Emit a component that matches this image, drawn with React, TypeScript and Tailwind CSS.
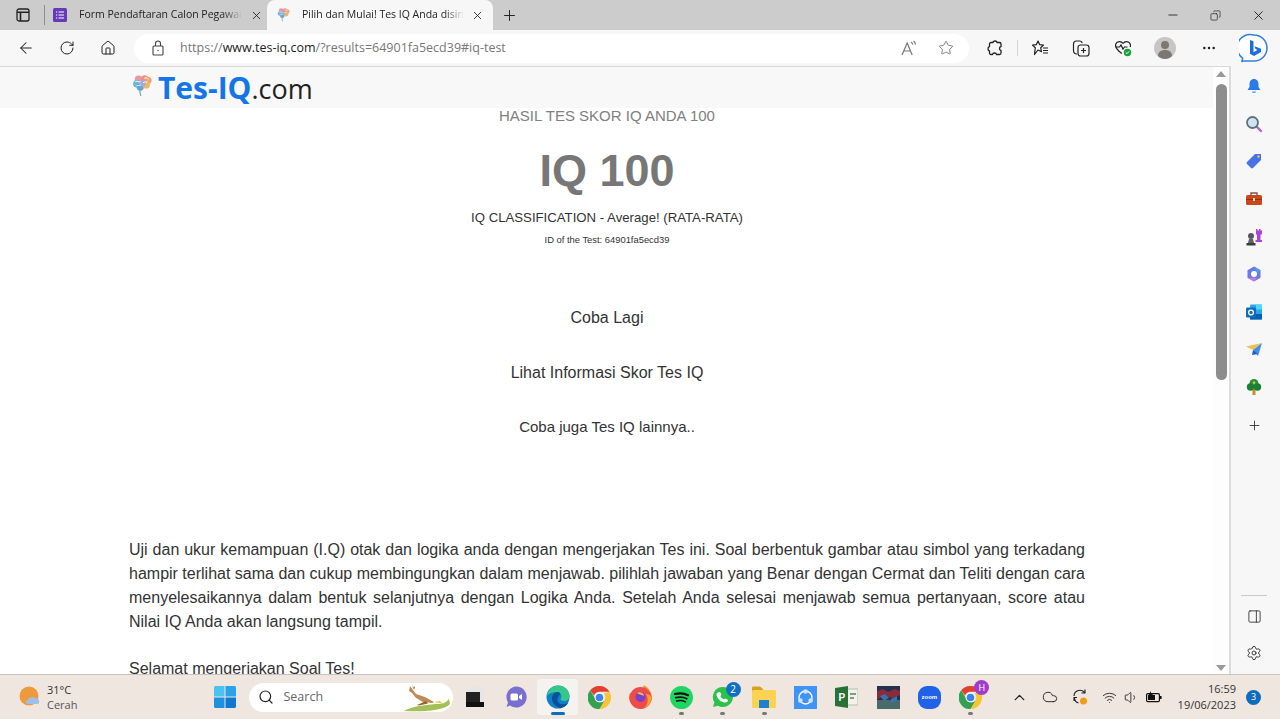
import {
  ArrowLeft, RotateCw, Home, Star, X, Plus, Minus, Copy, MoreHorizontal,
  Search, ChevronUp, Cloud, Wifi, Volume1, PanelRight, Settings,
} from "lucide-react"
import type { ReactNode } from "react"

const uiFont = "font-['Open_Sans',sans-serif]"

function TabStripIcon() {
  return (
    <svg width="16" height="16" viewBox="0 0 16 16" fill="none" stroke="#222" strokeWidth="1.3">
      <rect x="2" y="2" width="12" height="12" rx="2" />
      <path d="M2 5.2h12M5.500 5v9" strokeWidth="1.6" />
    </svg>
  )
}

function FormsIcon() {
  return (
    <svg width="14" height="14" viewBox="0 0 14 14">
      <rect width="14" height="14" rx="1.5" fill="#673ab7" />
      <path d="M3 4h1.200M5.500 4H11M3 7h1.200M5.500 7H11M3 10h1.200M5.500 10H11" stroke="#fff" strokeWidth="1.2" />
    </svg>
  )
}

function BrainLogo({ size = 20 }: { size?: number }) {
  return (
    <svg width={size} height={size} viewBox="0 0 20 20" fill="none">
      <circle cx="6" cy="4" r="3.500" fill="#e79aa5" />
      <circle cx="4.500" cy="8" r="3.500" fill="#6fb7d8" />
      <circle cx="7.500" cy="11" r="3.300" fill="#5ea8d0" />
      <circle cx="11.500" cy="3.500" r="3.300" fill="#ef8f8a" />
      <circle cx="14.500" cy="5" r="3.300" fill="#f0a36f" />
      <circle cx="13" cy="9" r="3.300" fill="#eeb765" />
      <circle cx="9.500" cy="7.500" r="3" fill="#a5a8d8" />
      <path d="M3 6c2-1 3 1 5 0M4 10c1-1 3 0 4-1M11 3c2-1 3 0 4 1M10 7c1-1 3 0 4-1" stroke="#fff" strokeWidth=".8" />
      <path d="M7 14l1 5" stroke="#7fa9c0" strokeWidth="1.200" />
    </svg>
  )
}

function LockIcon() {
  return (
    <svg width="14" height="16" viewBox="0 0 14 16" fill="none" stroke="#444" strokeWidth="1.1">
      <rect x="2" y="6" width="10" height="9" rx="1" />
      <path d="M4.500 6V3.500a2.500 2.500 0 0 1 5 0V6" />
      <circle cx="7" cy="10.500" r=".7" fill="#444" stroke="none" />
    </svg>
  )
}

function ExtensionIcon() {
  return (
    <svg width="18" height="18" viewBox="0 0 18 18" fill="none" stroke="#222" strokeWidth="1.300" strokeLinejoin="round">
      <path d="M7 3.500C7 1.500 11 1.500 11 3.500h2.500c.8 0 1.500.7 1.500 1.500v2.500c-2 .3-2 3.700 0 4V14c0 .8-.7 1.500-1.500 1.500H10.500c-.3-2-3.700-2-4 0H5c-.8 0-1.500-.7-1.500-1.500v-2C1.500 11.500 1.500 8 3.500 7.500V5C3.500 4.200 4.200 3.500 5 3.500z" />
    </svg>
  )
}

function ReadAloudIcon() {
  return (
    <svg width="18" height="18" viewBox="0 0 18 18" fill="none" stroke="#777" strokeWidth="1.2">
      <path d="M2 16L7.200 4l5 12M4 12h6.500" />
      <path d="M11 3c1 .5 1.500 1.300 1.700 2.500M13.500 2c1.200.8 1.800 2 2 3.500" />
    </svg>
  )
}

function FavoritesIcon() {
  return (
    <svg width="18" height="18" viewBox="0 0 18 18" fill="none" stroke="#222" strokeWidth="1.2" strokeLinejoin="round">
      <path d="M7 2l1.700 3.700 3.800.4-2.800 2.700.8 3.900L7 11l-3.500 4.500.8-6.700L1.500 6.100l3.800-.4z" />
      <path d="M12 9h5M12 11.500h5M12 14h5" />
    </svg>
  )
}

function CollectionsIcon() {
  return (
    <svg width="18" height="18" viewBox="0 0 18 18" fill="none" stroke="#222" strokeWidth="1.2">
      <path d="M5 15c-2 0-3.500-1.500-3.500-3.500V5c0-1.500 1-3 3-3h3c1.500 0 2.500.8 2.500 2" />
      <rect x="6" y="6" width="11" height="11" rx="2.500" />
      <path d="M11.500 9v5M9 11.500h5" />
    </svg>
  )
}

function HeartCheckIcon() {
  return (
    <svg width="18" height="18" viewBox="0 0 18 18" fill="none">
      <path d="M9 4.500C7.500 2 3 2 1.800 5c-1 2.500 1 5 3 7l3 2.500M9 4.500c1.500-2.500 6-2.500 7.200.5.400 1 .300 2 0 3" stroke="#222" strokeWidth="1.200" />
      <path d="M1.500 8h4l1.500-2 2 4 1.500-2h3" stroke="#222" strokeWidth="1.200" />
      <circle cx="13.500" cy="13.500" r="3.700" fill="#18a33a" />
      <path d="M11.800 13.500l1.200 1.200 2-2.200" stroke="#fff" strokeWidth="1" />
    </svg>
  )
}

function Avatar() {
  return (
    <div className="flex h-[22px] w-[22px] items-center justify-center rounded-full bg-[#c9c5c2]">
      <svg width="22" height="22" viewBox="0 0 22 22" fill="#7b7775">
        <circle cx="11" cy="8" r="4" />
        <path d="M4 19c0-4 3-6 7-6s7 2 7 6c-2 2-4.500 3-7 3s-5-1-7-3z" />
      </svg>
    </div>
  )
}

function BingIcon() {
  return (
    <svg width="30" height="30" viewBox="0 0 30 30">
      <path d="M15 2a13 13 0 0 1 0 26H4l-1 .500c-.500-1 1-2 .600-3.500A13 13 0 0 1 15 2z" fill="#fff" stroke="#2f7fe0" strokeWidth="1.500" />
      <path d="M11 7l3.500 1.200v11l4-2.200-2-1-1-2.700 6.500 2.400v3.300l-7 4-4-2.200z" fill="#1a6fd8" />
    </svg>
  )
}

/* sidebar icons */
function BellIcon() {
  return (
    <svg width="16" height="16" viewBox="0 0 16 16">
      <path d="M8 1c3 0 4.500 2.500 4.500 5v3l2 3H1.500l2-3V6C3.500 3.500 5 1 8 1z" fill="#2a7be8" />
      <path d="M6 13.500h4c0 1-1 1.500-2 1.500s-2-.5-2-1.500z" fill="#5a9ef0" />
    </svg>
  )
}
function SearchColorIcon() {
  return (
    <svg width="18" height="18" viewBox="0 0 18 18" fill="none">
      <path d="M11 11l5 5" stroke="#b35fd0" strokeWidth="2.400" strokeLinecap="round" />
      <circle cx="7.500" cy="7.500" r="5.500" fill="#cfe4ee" stroke="#5e7180" strokeWidth="1.800" />
    </svg>
  )
}
function TagIcon() {
  return (
    <svg width="18" height="18" viewBox="0 0 18 18">
      <path d="M10 2h6v6l-8 8c-.6.600-1.400.600-2 0l-4-4c-.6-.6-.6-1.400 0-2z" fill="#4a72e8" />
      <circle cx="13.500" cy="4.500" r="1.200" fill="#f3c14a" />
    </svg>
  )
}
function ToolboxIcon() {
  return (
    <svg width="18" height="16" viewBox="0 0 18 16">
      <path d="M6 4V2h6v2" fill="none" stroke="#7a5a50" strokeWidth="1.400" />
      <rect x="1" y="4" width="16" height="10" rx="1.500" fill="#c8481e" />
      <rect x="1" y="8" width="16" height="1" fill="#8f2f10" />
      <rect x="8" y="7" width="2" height="3" fill="#f1d2b8" />
    </svg>
  )
}
function ChessIcon() {
  return (
    <svg width="18" height="18" viewBox="0 0 18 18">
      <path d="M11 1h1.500v1.500H14V1h1.500v1.500H17V1v5l-1.500 1v5H17v2h-6.500v-2H12V7l-1-1z" fill="#b13fdc" />
      <circle cx="6" cy="8" r="3" fill="#55585c" />
      <path d="M4 11h4l1 4H3z" fill="#5f6266" />
      <rect x="1.500" y="15" width="9" height="2.500" fill="#3a3b3e" />
    </svg>
  )
}
function CopilotIcon() {
  return (
    <svg width="18" height="18" viewBox="0 0 18 18" fill="none">
      <path d="M9 1.500l6.500 3.800v7.400L9 16.500l-6.500-3.800V5.300z" fill="#6a78e8" />
      <path d="M9 1.500l6.500 3.800L12 8z" fill="#4a9ee8" />
      <path d="M2.500 12.700L9 16.500l3-4z" fill="#c779dd" />
      <circle cx="9" cy="9" r="3" fill="#fff" />
    </svg>
  )
}
function OutlookIcon() {
  return (
    <svg width="18" height="18" viewBox="0 0 18 18">
      <rect x="5" y="1.500" width="12" height="15" rx="1" fill="#28a8ea" />
      <rect x="11" y="1.500" width="6" height="5" fill="#50d9ff" />
      <rect x="5" y="11" width="12" height="5.500" fill="#0a5fb0" />
      <rect x="1" y="4.500" width="10" height="10" rx="1" fill="#0f6cbd" />
      <circle cx="6" cy="9.500" r="2.400" fill="none" stroke="#fff" strokeWidth="1.300" />
    </svg>
  )
}
function SendIcon() {
  return (
    <svg width="18" height="16" viewBox="0 0 18 16">
      <path d="M1 4.500L17 1 8 8z" fill="#f0c24b" />
      <path d="M17 1l-4 13-5-6z" fill="#3d8ff0" />
      <path d="M8 8l-1 5 6-1z" fill="#1f5fc8" />
    </svg>
  )
}
function TreeIcon() {
  return (
    <svg width="16" height="18" viewBox="0 0 16 18">
      <rect x="6.500" y="11" width="3" height="6" fill="#d08a24" />
      <circle cx="8" cy="5.500" r="4.500" fill="#23913c" />
      <circle cx="4.500" cy="9" r="3.700" fill="#1b8033" />
      <circle cx="11.500" cy="9" r="3.700" fill="#1b8033" />
      <rect x="6.800" y="3.500" width="2.400" height="2.400" fill="#d7c13c" transform="rotate(45 8 4.700)" />
    </svg>
  )
}

/* taskbar icons */
function StartIcon() {
  return (
    <svg width="22" height="22" viewBox="0 0 22 22">
      <path d="M0 1.500C0 .7.700 0 1.500 0h9v10.500H0z" fill="#4cc2f1" />
      <path d="M11.500 0h9c.8 0 1.500.7 1.500 1.500v9H11.500z" fill="#2aa3e8" />
      <path d="M0 11.500h10.500V22h-9C.7 22 0 21.300 0 20.500z" fill="#1e90df" />
      <path d="M11.500 11.500H22v9c0 .8-.7 1.500-1.500 1.500h-9z" fill="#0f78d0" />
    </svg>
  )
}
function Kangaroo() {
  return (
    <svg width="46" height="28" viewBox="0 0 46 28">
      <path d="M0 27c8-5 26-7 36-7 4 0 7-3 9-5l1 5c-6 7-30 8-46 7z" fill="#a3bf55" />
      <path d="M30 18l6-1 3 3z" fill="#d7d24a" />
      <path d="M6 2l3 4 3 4 9 3 9 5-2 1-9-1-7-4-4-5-3-2z" fill="#c08a58" />
      <path d="M8 0l1 4 2-2-1 4z" fill="#8a5529" />
      <path d="M22 17l-9 4 2 .5 9-2z" fill="#9a6231" />
    </svg>
  )
}
function DarkTile() {
  return (
    <svg width="18" height="20" viewBox="0 0 18 20">
      <rect width="18" height="20" fill="#e6e6e6" />
      <rect y="5" width="14" height="15" fill="#222" />
      <rect y="15" width="18" height="5" fill="#111" />
    </svg>
  )
}
function TeamsIcon() {
  return (
    <svg width="22" height="22" viewBox="0 0 22 22">
      <path d="M11 .5a10.500 10.500 0 1 1-6 19L1.500 21 3 16.500A10.500 10.500 0 0 1 11 .5z" fill="#7a6fd0" />
      <rect x="5.500" y="7.500" width="7.500" height="7" rx="1.500" fill="#fff" />
      <path d="M14 10l3-2v6l-3-2z" fill="#fff" />
    </svg>
  )
}
function EdgeIcon() {
  return (
    <svg width="24" height="24" viewBox="0 0 24 24">
      <circle cx="12" cy="12" r="11.500" fill="#0f7fc8" />
      <path d="M1 11C2 4 7 .5 12 .5c6.500 0 11.500 5 11.500 10.500 0 3-2.500 5-5.500 5-2 0-3.500-.8-3.500-2 2-2.500.5-7-3.500-7C7 7 3 8 1 11z" fill="#35c88a" />
      <path d="M12 7c-3.500 0-6 3-6 6.500 0 4 3.500 8 8.500 9.500 3-.5 6.500-2.500 8-5.500-2.500 2-6.500 2.500-9 1-2.500-1.500-3.500-6 1-9.500-.7-1.300-1.500-2-2.500-2z" fill="#0a4f97" />
    </svg>
  )
}
function ChromeIcon() {
  return (
    <svg width="23" height="23" viewBox="0 0 24 24">
      <path d="M12 0a12 12 0 0 1 10.400 6H12a6 6 0 0 0-5.700 4L2.300 4.500A12 12 0 0 1 12 0z" fill="#e0402f" />
      <path d="M22.400 6A12 12 0 0 1 12 24l5.200-9A6 6 0 0 0 16.500 8z" fill="#f7c531" />
      <path d="M2.300 4.500A12 12 0 0 0 12 24l5.200-9a6 6 0 0 1-10.400-3z" fill="#35a04f" />
      <circle cx="12" cy="12" r="5" fill="#fff" />
      <circle cx="12" cy="12" r="4" fill="#3d83f0" />
    </svg>
  )
}
function FirefoxIcon() {
  return (
    <svg width="23" height="24" viewBox="0 0 23 24">
      <path d="M15 0c5 3 8 8 8 12.500A11.500 11.500 0 1 1 1 7.500c.5 1 1 1.500 1.500 2C3 7 5 5 8 4c3 0 5 2 7-4z" fill="#f79a2b" />
      <circle cx="11.500" cy="13" r="11" fill="#ee4b4b" />
      <path d="M22.500 13a11 11 0 0 1-8 10.500C19 20 20 14 17 9c3 0 5 1 5.500 4z" fill="#f7a02b" />
      <circle cx="11.500" cy="12" r="5" fill="#7b3fc8" />
      <path d="M8 8c3-2 7 0 7 3-3-2-5-1-7-3z" fill="#f2c14a" />
    </svg>
  )
}
function SpotifyIcon() {
  return (
    <svg width="23" height="23" viewBox="0 0 23 23" fill="none">
      <circle cx="11.500" cy="11.500" r="11.500" fill="#1ed760" />
      <path d="M5 8c4-1 9-1 13 1.200" stroke="#111" strokeWidth="2.200" strokeLinecap="round" />
      <path d="M5.800 11.700c3.500-.9 8-.6 11 1" stroke="#111" strokeWidth="1.800" strokeLinecap="round" />
      <path d="M6.500 15c3-.7 6.500-.5 9 .8" stroke="#111" strokeWidth="1.500" strokeLinecap="round" />
    </svg>
  )
}
function WhatsappIcon() {
  return (
    <svg width="22" height="22" viewBox="0 0 22 22">
      <path d="M11 1a10 10 0 1 1-5 18.700L1 21l1.400-4.700A10 10 0 0 1 11 1z" fill="#2bc24c" />
      <path d="M7.500 6c1 0 1.500 2 1.800 3l-1 1c.8 1.500 2 2.700 3.700 3.500l1-1.100c1 .3 3 1 3 1.800 0 1.300-1.500 2.300-3 2.300-4 0-8.500-4.500-8.500-8 0-1.500 1.500-2.500 3-2.500z" fill="#fff" />
    </svg>
  )
}
function FolderIcon() {
  return (
    <svg width="24" height="22" viewBox="0 0 24 22">
      <path d="M0 2c0-1 .7-1.500 1.500-1.500H8l3 2.500v3H0z" fill="#d9a21b" />
      <rect y="4" width="24" height="18" rx="1.500" fill="#fbd254" />
      <rect x="7" y="14" width="10" height="8" fill="#1f7fd0" />
    </svg>
  )
}
function ShareitIcon() {
  return (
    <svg width="23" height="23" viewBox="0 0 23 23" fill="none">
      <rect width="23" height="23" fill="#3f94f5" />
      <circle cx="11.500" cy="11.500" r="6.500" stroke="#fff" strokeWidth="1.400" />
      <circle cx="11.500" cy="5.500" r="2.300" fill="#cfe3ff" />
      <circle cx="6.300" cy="14.500" r="2.300" fill="#cfe3ff" />
      <circle cx="16.700" cy="14.500" r="2.300" fill="#cfe3ff" />
    </svg>
  )
}
function ProjectIcon() {
  return (
    <svg width="23" height="22" viewBox="0 0 23 22">
      <rect x="6" y="3" width="17" height="16" fill="#f3f1ee" stroke="#a9c4ae" />
      <path d="M0 2l13-2v22L0 20z" fill="#2a7136" />
      <path d="M15 8h6M15 12h4" stroke="#55825c" strokeWidth="1.500" />
      <text x="3.500" y="15" fontSize="10" fontWeight="700" fill="#fff" fontFamily="Liberation Sans, sans-serif">P</text>
    </svg>
  )
}
function GameThumb() {
  return (
    <svg width="23" height="23" viewBox="0 0 23 23">
      <rect width="23" height="23" fill="#24304f" />
      <rect y="14" width="23" height="9" fill="#4a6a6a" />
      <path d="M0 5l6-2 5 3 7-3 5 2v4l-8 3-6-2-9 3z" fill="#8a2b3a" />
      <path d="M3 10l5-2 4 4-5 3zM14 13l6-3v5l-6 2z" fill="#3a6fb0" />
    </svg>
  )
}
function ZoomIcon() {
  return (
    <div className="flex h-[23px] w-[23px] items-center justify-center rounded-[9px] bg-[#1f62e8] font-['Liberation_Sans',sans-serif] text-[6px] font-bold text-white">
      zoom
    </div>
  )
}
function SyncIcon() {
  return (
    <svg width="18" height="18" viewBox="0 0 18 18" fill="none" stroke="#222" strokeWidth="1.100">
      <path d="M3 8a6 6 0 0 1 11-3M14 1.500V5h-3.500" />
      <path d="M3 13V9.500h3M3.500 9.500c0 3 2 5 4 5.500" />
      <circle cx="12.500" cy="13" r="3.500" fill="#f59a16" stroke="none" />
    </svg>
  )
}
function BatteryIcon() {
  return (
    <svg width="16" height="12" viewBox="0 0 16 12">
      <rect x=".6" y="2.600" width="12.800" height="8" rx="1.200" fill="none" stroke="#111" strokeWidth="1.200" />
      <rect x="2" y="4" width="7" height="5" fill="#111" />
      <rect x="14" y="5" width="1.600" height="3" fill="#111" />
      <path d="M5 0L2 5h2l-1 3 4-5H5z" fill="#111" />
    </svg>
  )
}

type TaskItem = { key: string; icon: ReactNode; dot?: boolean; active?: boolean; badge?: ReactNode }

const taskItems: TaskItem[] = [
  { key: "tile", icon: <DarkTile /> },
  { key: "teams", icon: <TeamsIcon /> },
  { key: "edge", icon: <EdgeIcon />, active: true },
  { key: "chrome", icon: <ChromeIcon /> },
  { key: "firefox", icon: <FirefoxIcon /> },
  { key: "spotify", icon: <SpotifyIcon />, dot: true },
  {
    key: "whatsapp",
    icon: <WhatsappIcon />,
    dot: true,
    badge: (
      <span className={`absolute right-[3px] top-[3px] flex h-[15px] w-[15px] items-center justify-center rounded-full bg-[#1170c4] text-[10px] text-white ${uiFont}`}>
        2
      </span>
    ),
  },
  { key: "folder", icon: <FolderIcon />, dot: true },
  { key: "shareit", icon: <ShareitIcon /> },
  { key: "project", icon: <ProjectIcon /> },
  { key: "game", icon: <GameThumb /> },
  { key: "zoom", icon: <ZoomIcon /> },
  {
    key: "profile",
    icon: <ChromeIcon />,
    dot: true,
    badge: (
      <span className={`absolute right-[2px] top-[1px] flex h-[15px] w-[15px] items-center justify-center rounded-full bg-[#a23cc8] text-[9px] text-white ${uiFont}`}>
        H
      </span>
    ),
  },
]

const sideIcons = [
  { key: "bell", icon: <BellIcon /> },
  { key: "search", icon: <SearchColorIcon /> },
  { key: "tag", icon: <TagIcon /> },
  { key: "tools", icon: <ToolboxIcon /> },
  { key: "chess", icon: <ChessIcon /> },
  { key: "copilot", icon: <CopilotIcon /> },
  { key: "outlook", icon: <OutlookIcon /> },
  { key: "send", icon: <SendIcon /> },
  { key: "tree", icon: <TreeIcon /> },
  { key: "plus", icon: <Plus size={15} strokeWidth={1.3} color="#222" /> },
]

export default function App() {
  return (
    <div className="flex h-screen w-full flex-col overflow-hidden bg-white">
      {/* Tab strip */}
      <div className={`flex h-[30px] shrink-0 items-center bg-[#cccccc] text-[10.5px] text-[#222] ${uiFont}`}>
        <div className="flex w-[44px] justify-center pl-[1px]">
          <TabStripIcon />
        </div>
        <div className="h-[20px] w-px bg-[#8f8f8f]" />
        <div className="flex h-full w-[222px] items-center pl-[8px]">
          <FormsIcon />
          <span className="ml-[12px] w-[163px] overflow-hidden whitespace-nowrap [mask-image:linear-gradient(to_right,black_88%,transparent)]">
            Form Pendaftaran Calon Pegawai
          </span>
          <X size={13} strokeWidth={1.6} className="ml-[8px]" />
        </div>
        <div className="flex h-full w-[226px] items-center rounded-t-[8px] bg-[#f7f7f7] pl-[10px]">
          <BrainLogo size={14} />
          <span className="ml-[11px] w-[162px] overflow-hidden whitespace-nowrap [mask-image:linear-gradient(to_right,black_88%,transparent)]">
            Pilih dan Mulai! Tes IQ Anda disini
          </span>
          <X size={13} strokeWidth={1.6} className="ml-[7px]" />
        </div>
        <Plus size={17} strokeWidth={1.4} className="ml-[8px]" />
        <div className="ml-auto flex items-center">
          <Minus size={14} strokeWidth={1.5} className="mr-[30px]" />
          <Copy size={11} strokeWidth={1.5} className="mr-[30px] -scale-x-100" />
          <X size={15} strokeWidth={1.5} className="mr-[14px]" />
        </div>
      </div>

      {/* Toolbar */}
      <div className="flex h-[36px] shrink-0 items-center bg-[#f7f7f7] text-[#222]">
        <ArrowLeft size={18} strokeWidth={1.4} className="ml-[17px]" />
        <RotateCw size={16} strokeWidth={1.5} className="ml-[24px]" />
        <Home size={16} strokeWidth={1.5} className="ml-[25px]" />
        <div className={`ml-[18px] flex h-[29px] w-[835px] items-center rounded-full bg-white pl-[17px] pr-[15px] text-[12.5px] ${uiFont}`}>
          <LockIcon />
          <span className="ml-[15px] text-[#777]">
            https://<span className="text-[#222]">www.tes-iq.com</span>/?results=64901fa5ecd39#iq-test
          </span>
          <span className="ml-auto mr-[20px]">
            <ReadAloudIcon />
          </span>
          <Star size={16} strokeWidth={1.2} color="#666" />
        </div>
        <span className="ml-[17px]">
          <ExtensionIcon />
        </span>
        <div className="ml-[13px] h-[16px] w-px bg-[#d5d5d5]" />
        <span className="ml-[13px]">
          <FavoritesIcon />
        </span>
        <span className="ml-[23px]">
          <CollectionsIcon />
        </span>
        <span className="ml-[24px]">
          <HeartCheckIcon />
        </span>
        <span className="ml-[22px]">
          <Avatar />
        </span>
        <MoreHorizontal size={16} strokeWidth={1.8} className="ml-[25px]" />
        <span className="ml-[22px]">
          <BingIcon />
        </span>
      </div>

      {/* Browser body */}
      <div className="flex min-h-0 flex-1">
        <div className="flex min-w-0 flex-1 border-t border-[#d8d8d8]">
          {/* Page */}
          <main className="min-w-0 flex-1 overflow-hidden bg-white font-['Liberation_Sans',sans-serif] text-[#333]">
            <header className="flex h-[41px] items-center bg-[#f8f8f8] pl-[132px]">
              <span className="mb-[4px]">
                <BrainLogo size={22} />
              </span>
              <span className={`ml-[4px] whitespace-nowrap text-[30px] font-bold leading-[41px] text-[#1476e6] ${uiFont}`}>
                Tes-IQ<span className="text-[27px] font-normal text-[#222]">.com</span>
              </span>
            </header>
            <div className="ml-[129px] w-[956px]">
              <section className="text-center">
                <h2 className="text-[15px] leading-[16px] text-[#808080]">HASIL TES SKOR IQ ANDA 100</h2>
                <h1 className="mt-[22px] text-[45px] font-bold leading-[50px] text-[#777777]">IQ 100</h1>
                <p className="mt-[14px] text-[13.2px] leading-[16px] text-[#333]">IQ CLASSIFICATION - Average! (RATA-RATA)</p>
                <p className="mt-[8px] text-[9.4px] leading-[12px] text-[#333]">ID of the Test: 64901fa5ecd39</p>
                <p className="mt-[62px] text-[16px] leading-[20px]">Coba Lagi</p>
                <p className="mt-[35px] text-[16px] leading-[20px]">Lihat Informasi Skor Tes IQ</p>
                <p className="mt-[35px] text-[15px] leading-[18px]">Coba juga Tes IQ lainnya..</p>
              </section>
              <p className="mt-[102px] text-justify text-[16px] leading-[24px]">
                Uji dan ukur kemampuan (I.Q) otak dan logika anda dengan mengerjakan Tes ini. Soal berbentuk gambar atau simbol yang terkadang hampir terlihat sama dan cukup membingungkan dalam menjawab. pilihlah jawaban yang Benar dengan Cermat dan Teliti dengan cara menyelesaikannya dalam bentuk selanjutnya dengan Logika Anda. Setelah Anda selesai menjawab semua pertanyaan, score atau Nilai IQ Anda akan langsung tampil.
              </p>
              <p className="mt-[23px] text-[16px] leading-[24px]">Selamat mengerjakan Soal Tes!</p>
            </div>
          </main>

          {/* Scrollbar */}
          <div className="flex w-[16px] shrink-0 flex-col items-center bg-[#fdfdfd] pt-[4px] pb-[3px]">
            <div className="h-0 w-0 border-x-[5px] border-b-[6px] border-x-transparent border-b-[#9a9a9a]" />
            <div className="mt-[7px] h-[296px] w-[11px] rounded-full bg-[#8d8d8d]" />
            <div className="mt-auto h-0 w-0 border-x-[5px] border-t-[6px] border-x-transparent border-t-[#9a9a9a]" />
          </div>
        </div>

        {/* Edge sidebar */}
        <aside className="flex w-[51px] shrink-0 flex-col items-center border-l-2 border-[#dcdcdc] bg-[#f7f7f7] pr-[3px] pt-[1px]">
          {sideIcons.map((s) => (
            <div key={s.key} className="flex h-[37.7px] w-full items-center justify-center">
              {s.icon}
            </div>
          ))}
          <div className="mt-auto h-px w-[26px] bg-[#c9c9c9]" />
          <PanelRight size={15} strokeWidth={1.3} color="#222" className="mt-[13px]" />
          <Settings size={16} strokeWidth={1.3} color="#222" className="mb-[13px] mt-[21px]" />
        </aside>
      </div>

      {/* Taskbar */}
      <footer className={`flex h-[45px] shrink-0 items-center border-t border-[#c9c4bf] bg-[#efe6e0] text-[#333] ${uiFont}`}>
        <div className="ml-[19px] flex items-center">
          <svg width="22" height="22" viewBox="0 0 22 22">
            <circle cx="10" cy="10" r="9.500" fill="#ee9a3c" />
            <path d="M9 18c-3 0-3-4 0-4 .5-3 5-4 7-2 3 0 5 2 4 5-.5 1-1 1-2 1z" fill="#9fbfe8" />
          </svg>
          <div className="ml-[6px] text-[11px] leading-[15px]">
            <div>31°C</div>
            <div className="text-[#555]">Cerah</div>
          </div>
        </div>
        <span className="ml-[137px]">
          <StartIcon />
        </span>
        <div className="relative ml-[13px] flex h-[29px] w-[204px] items-center rounded-full bg-white pl-[9px]">
          <Search size={16} strokeWidth={1.8} color="#222" />
          <span className="ml-[9px] text-[12.5px] text-[#666]">Search</span>
          <span className="absolute bottom-0 right-[3px]">
            <Kangaroo />
          </span>
        </div>
        <div className="ml-[1px] flex">
          {taskItems.map((t) => (
            <div
              key={t.key}
              className={`relative flex h-[36px] w-[41.3px] flex-col items-center justify-center rounded-[4px] ${t.active ? "bg-[#f6f2ef]" : ""}`}
            >
              {t.icon}
              {t.badge}
              {t.dot && <span className="absolute bottom-0 h-[3px] w-[5px] rounded-full bg-[#777]" />}
              {t.active && <span className="absolute bottom-0 h-[3px] w-[14px] rounded-full bg-[#0f6cbd]" />}
            </div>
          ))}
        </div>
        <ChevronUp size={17} strokeWidth={1.8} color="#222" className="ml-[20px]" />
        <Cloud size={16} strokeWidth={1.4} color="#222" className="ml-[14px]" />
        <span className="ml-[13px]">
          <SyncIcon />
        </span>
        <Wifi size={15} strokeWidth={1.4} color="#222" className="ml-[13px]" />
        <Volume1 size={15} strokeWidth={1.4} color="#222" className="ml-[7px]" />
        <span className="ml-[7px]">
          <BatteryIcon />
        </span>
        <div className="ml-auto text-right text-[11px] leading-[16px] text-[#333]">
          <div>16:59</div>
          <div>19/06/2023</div>
        </div>
        <span className="ml-[10px] mr-[19px] flex h-[15px] w-[15px] items-center justify-center rounded-full bg-[#0f6cbd] text-[9px] text-white">
          3
        </span>
      </footer>
    </div>
  )
}
